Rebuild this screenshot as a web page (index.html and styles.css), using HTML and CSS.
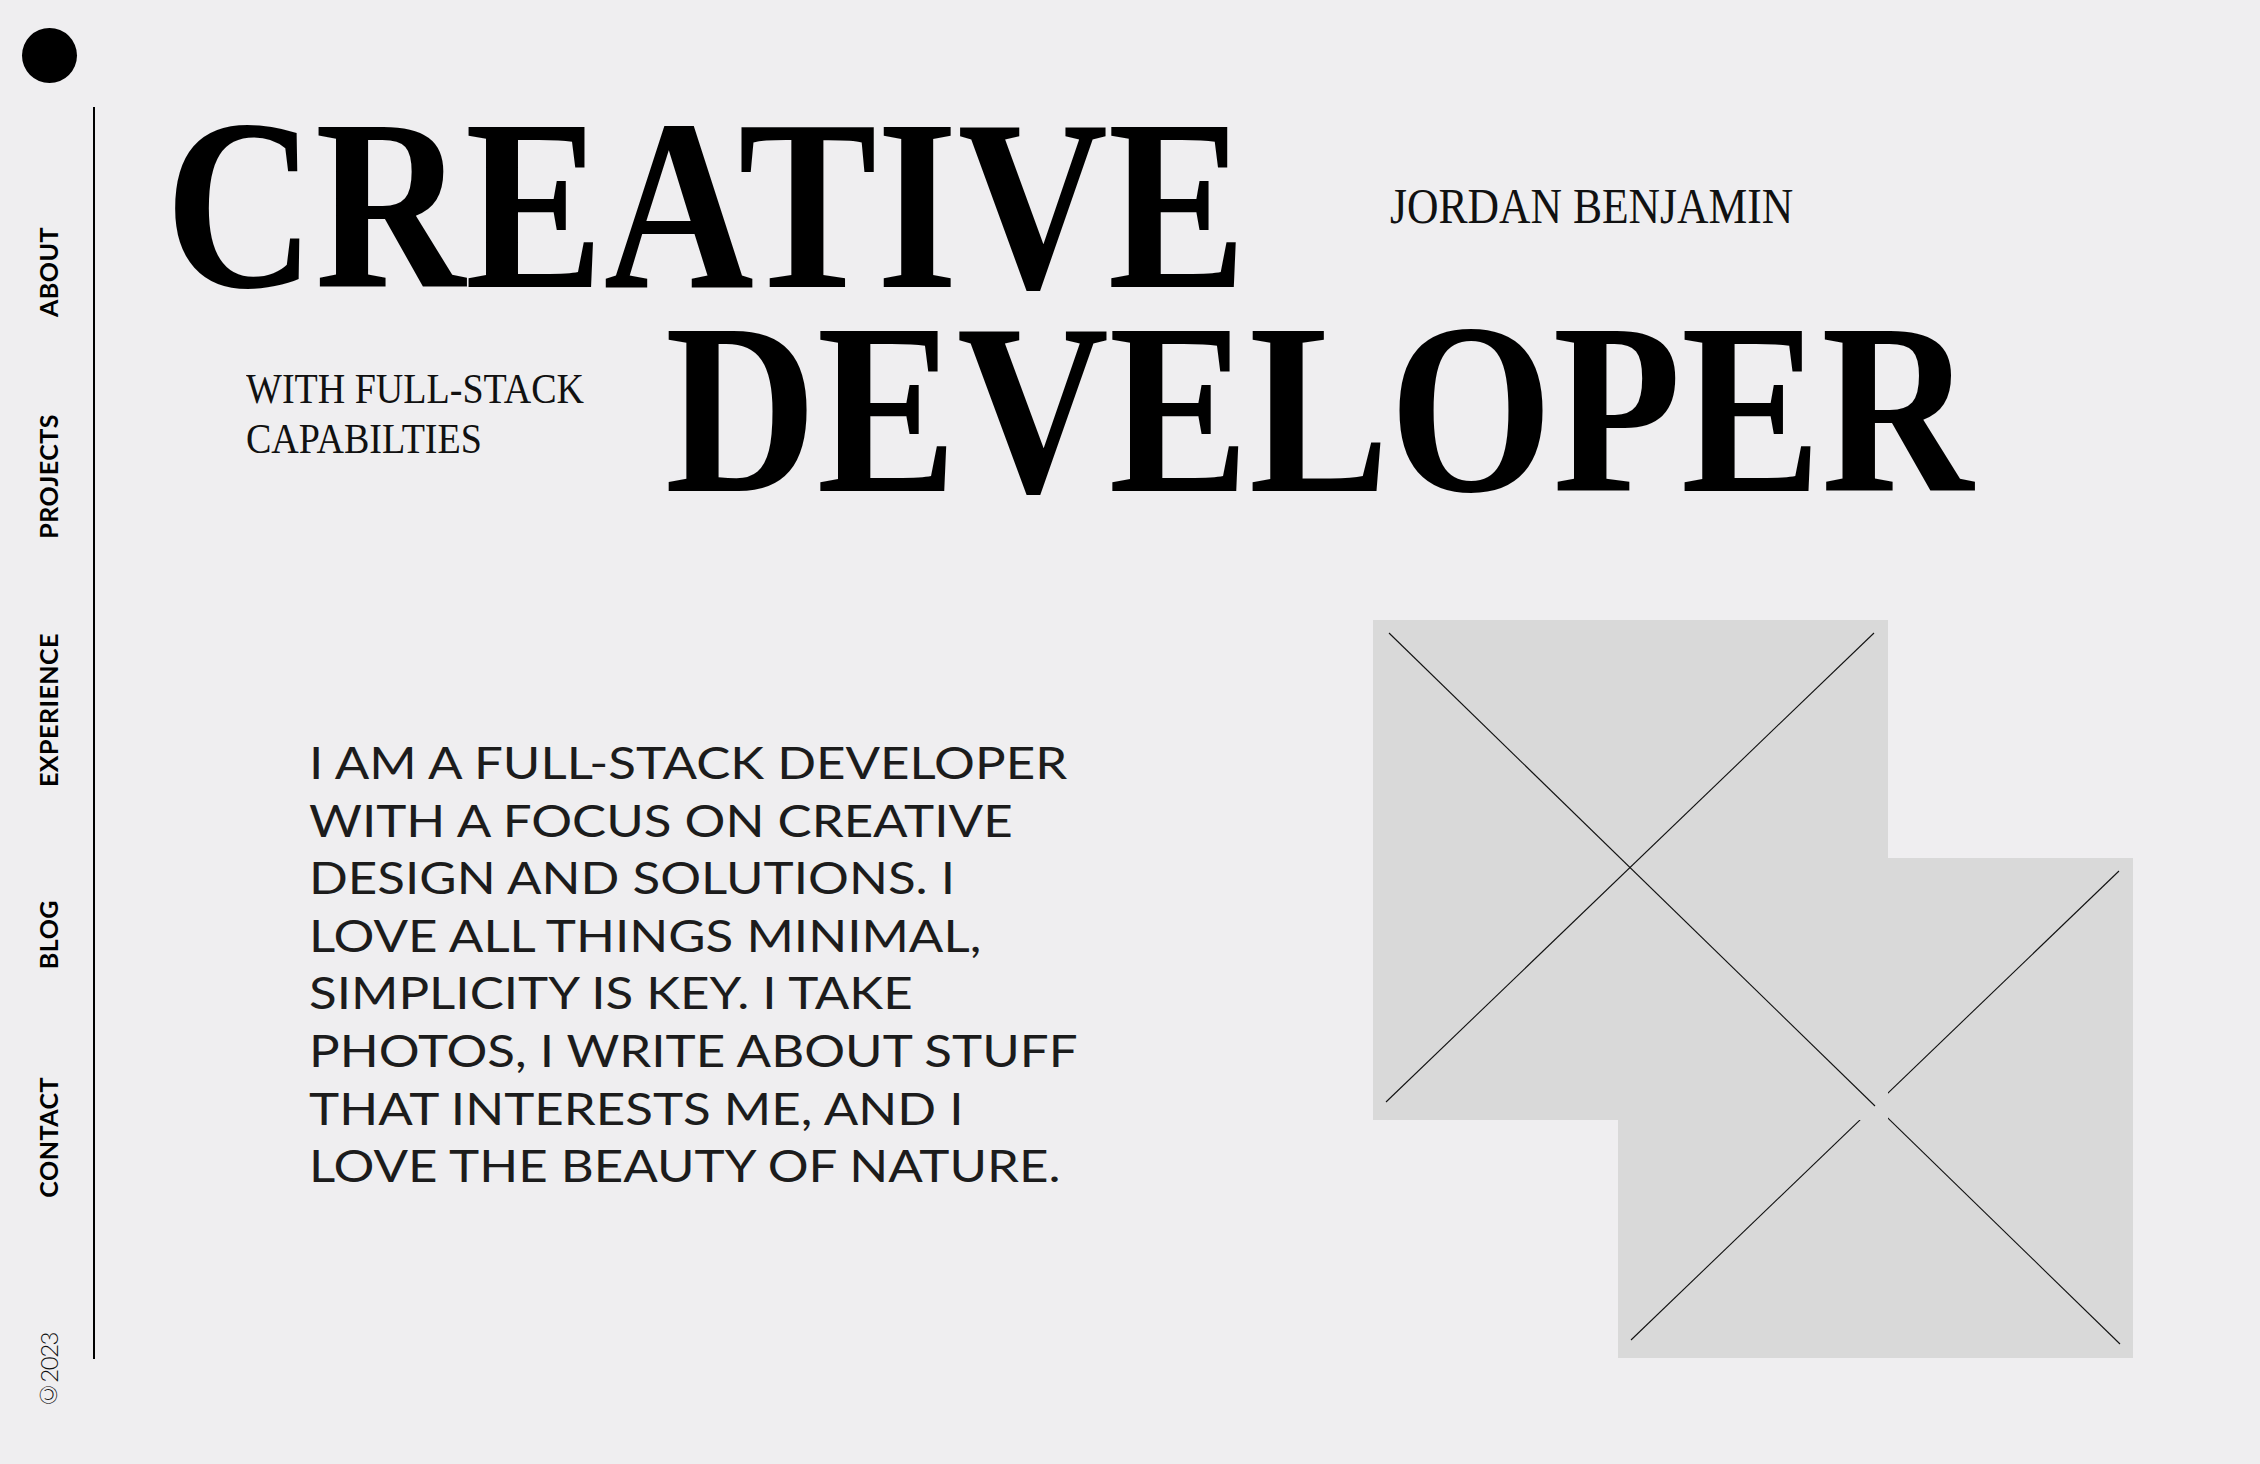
FILE: index.html
```html
<!DOCTYPE html>
<html lang="en">
<head>
<meta charset="utf-8">
<title>Jordan Benjamin — Creative Developer</title>
<link rel="stylesheet" href="styles.css">
</head>
<body>
<div class="page">
  <aside class="sidebar">
    <div class="dot"></div>
    <nav class="nav">
      <div class="nav-item"><a class="nav-label" href="#about">ABOUT</a></div>
      <div class="nav-item"><a class="nav-label" href="#projects">PROJECTS</a></div>
      <div class="nav-item"><a class="nav-label" href="#experience">EXPERIENCE</a></div>
      <div class="nav-item"><a class="nav-label" href="#blog">BLOG</a></div>
      <div class="nav-item"><a class="nav-label" href="#contact">CONTACT</a></div>
      <div class="nav-item"><span class="nav-label copy">©2023</span></div>
    </nav>
  </aside>
  <main class="main">
    <div class="row-title">
      <h1 class="title title-creative">CREATIVE</h1>
      <p class="name">JORDAN BENJAMIN</p>
    </div>
    <div class="row-sub">
      <p class="tagline">WITH FULL-STACK<br>CAPABILTIES</p>
      <h1 class="title title-dev">DEVELOPER</h1>
    </div>
    <div class="row-body">
      <p class="bio">
        <span class="bio-line">I AM A FULL-STACK DEVELOPER</span>
        <span class="bio-line">WITH A FOCUS ON CREATIVE</span>
        <span class="bio-line">DESIGN AND SOLUTIONS. I</span>
        <span class="bio-line">LOVE ALL THINGS MINIMAL,</span>
        <span class="bio-line">SIMPLICITY IS KEY. I TAKE</span>
        <span class="bio-line">PHOTOS, I WRITE ABOUT STUFF</span>
        <span class="bio-line">THAT INTERESTS ME, AND I</span>
        <span class="bio-line">LOVE THE BEAUTY OF NATURE.</span>
      </p>
      <div class="collage">
        <div class="ph ph1">
          <svg viewBox="0 0 515 500" preserveAspectRatio="none"><line x1="16" y1="13" x2="502" y2="486"/><line x1="501" y1="13" x2="13" y2="482"/></svg>
        </div>
        <div class="ph ph2">
          <svg viewBox="0 0 515 500" preserveAspectRatio="none"><line x1="16" y1="13" x2="502" y2="486"/><line x1="501" y1="13" x2="13" y2="482"/></svg>
        </div>
      </div>
    </div>
  </main>
</div>
</body>
</html>
```

FILE: styles.css
```css
html, body {
  margin: 0;
  padding: 0;
}

body {
  background: #efeef0;
  width: 2260px;
  height: 1464px;
  overflow: hidden;
  color: #000;
}

.page {
  display: flex;
  height: 1464px;
  overflow: hidden;
}

.sidebar {
  width: 93px;
  flex: none;
  display: flex;
  flex-direction: column;
}

.dot {
  flex: none;
  width: 55px;
  height: 55px;
  border-radius: 50%;
  background: #000;
  margin: 28px 0 0 21.5px;
}

.nav {
  flex: none;
  display: flex;
  flex-direction: column;
  align-items: center;
  padding-left: 3px;
}

.nav-item {
  flex: none;
  height: 160px;
  display: flex;
  align-items: center;
  justify-content: center;
}

.nav-item:nth-child(1) { margin-top: 109.5px; }
.nav-item:nth-child(2) { margin-top: 43.5px; }
.nav-item:nth-child(3) { margin-top: 74.5px; }
.nav-item:nth-child(4) { margin-top: 64px; }
.nav-item:nth-child(5) { margin-top: 43px; }
.nav-item:nth-child(6) { margin-top: 74px; }

.nav-label {
  writing-mode: vertical-rl;
  transform: rotate(180deg);
  font-family: Lato, "Noto Sans", sans-serif;
  font-weight: 700;
  font-size: 25px;
  line-height: 25px;
  letter-spacing: 0.5px;
  color: #000;
  text-decoration: none;
  white-space: nowrap;
}

.copy {
  font-weight: 300;
  font-size: 24px;
  letter-spacing: -1.5px;
  color: #111;
}

.main {
  flex: 1;
  margin-top: 107px;
  height: 1252px;
  border-left: 2px solid #000;
  box-sizing: border-box;
  display: flex;
  flex-direction: column;
}

.row-title {
  display: flex;
  height: 196px;
  padding-left: 70px;
  flex: none;
}

.title {
  margin: 0;
  font-family: "Liberation Serif", "Times New Roman", serif;
  font-weight: 700;
  font-size: 243px;
  line-height: 196px;
  white-space: nowrap;
  transform-origin: 0 0;
}

.title-creative {
  width: 1225px;
  flex: none;
  transform: scaleX(0.855);
}

.title-dev {
  margin-top: 8px;
  transform: scaleX(0.865);
}

.name {
  margin: 74px 0 0;
  font-family: "Liberation Serif", "Times New Roman", serif;
  font-size: 50px;
  line-height: 50px;
  color: #111;
  white-space: nowrap;
  transform: scaleX(0.872);
  transform-origin: 0 0;
}

.row-sub {
  display: flex;
  height: 204px;
  padding-left: 151px;
  flex: none;
}

.tagline {
  width: 419px;
  flex: none;
  margin: 60.6px 0 0;
  font-family: "Liberation Serif", "Times New Roman", serif;
  font-size: 42px;
  line-height: 50px;
  color: #111;
  white-space: nowrap;
  transform: scaleX(0.905);
  transform-origin: 0 0;
}

.row-body {
  display: flex;
  padding-left: 214px;
  flex: none;
}

.bio {
  width: 1064px;
  flex: none;
  margin: 227px 0 0;
  font-family: Lato, "Noto Sans", sans-serif;
  font-weight: 400;
  font-size: 45px;
  line-height: 57.6px;
  color: #1c1c1c;
  transform: scaleX(1.135);
  transform-origin: 0 0;
}

.bio-line {
  display: block;
  white-space: nowrap;
}

.collage {
  margin-top: 113px;
  display: grid;
  grid-template-columns: 245px 270px 245px;
  grid-template-rows: 238px 262px 238px;
}

.ph {
  background: #d9d9d9;
}

.ph1 {
  grid-column: 1 / 3;
  grid-row: 1 / 3;
  z-index: 2;
}

.ph2 {
  grid-column: 2 / 4;
  grid-row: 2 / 4;
  z-index: 1;
}

.ph svg {
  display: block;
  width: 100%;
  height: 100%;
}

.ph line {
  stroke: #111;
  stroke-width: 1.1;
}
```
